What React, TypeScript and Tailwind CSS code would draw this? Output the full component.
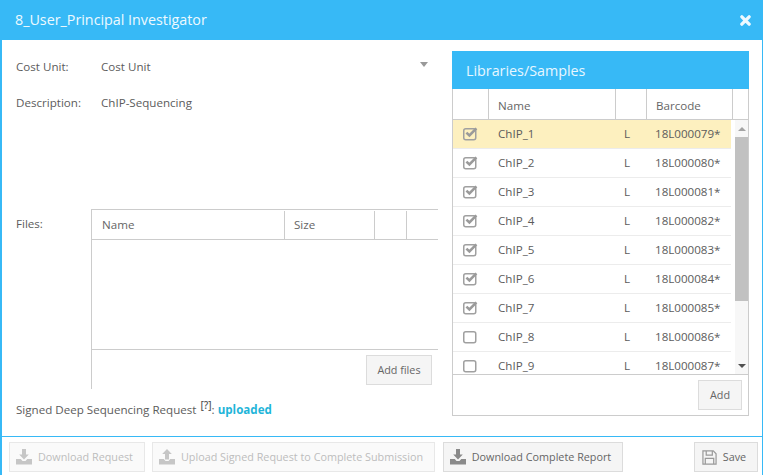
const rows = [
  ["ChIP_1", "18L000079*", true],
  ["ChIP_2", "18L000080*", true],
  ["ChIP_3", "18L000081*", true],
  ["ChIP_4", "18L000082*", true],
  ["ChIP_5", "18L000083*", true],
  ["ChIP_6", "18L000084*", true],
  ["ChIP_7", "18L000085*", true],
  ["ChIP_8", "18L000086*", false],
  ["ChIP_9", "18L000087*", false],
] as const;

function Tray({ up, className }: { up?: boolean; className?: string }) {
  return (
    <svg viewBox="0 0 16 16" className={className} fill="currentColor">
      {up ? <path d="M8 0 L12.8 5 H10 V10.5 H6 V5 H3.2 Z" /> : <path d="M6 0 H10 V5.5 H12.8 L8 10.5 L3.2 5.5 H6 Z" />}
      <path d="M0 10 H4.8 L6.5 12 H9.5 L11.2 10 H16 V15.5 H0 Z" />
    </svg>
  );
}

function Box({ checked }: { checked: boolean }) {
  return (
    <svg viewBox="0 0 15 14" className="h-[14px] w-[15px]">
      <rect x="0.75" y="1.75" width="12" height="11" rx="2" fill="none" stroke="#a0a0a0" strokeWidth="1.5" />
      {checked && <path d="M3.4 5.6 L6.4 8.4 L13.4 1.4" fill="none" stroke="#9a9a9a" strokeWidth="2.6" />}
    </svg>
  );
}

function Btn({ children, className = "" }: { children: React.ReactNode; className?: string }) {
  return (
    <div className={`flex items-center justify-center border border-[#dcdcdc] bg-[#f5f5f5] text-[10.8px] text-[#666] ${className}`}>
      {children}
    </div>
  );
}

export default function App() {
  return (
    <div className="flex h-[475px] w-[763px] flex-col overflow-hidden border-l-2 border-r border-[#37b9f6] bg-white text-[11.6px] text-[#5c5c5c] [font-family:'Open_Sans',sans-serif]">
      <header className="-ml-[2px] -mr-px flex h-10 shrink-0 items-center justify-between bg-[#37b9f6] pl-[15px] pr-[12px] text-white">
        <span className="text-[14.3px] text-[#eef9ff]">8_User_Principal Investigator</span>
        <svg viewBox="0 0 10 10" className="mt-[1px] h-[11px] w-[11px]" fill="none" stroke="#eef9ff" strokeWidth="3" strokeLinecap="round">
          <path d="M1.7 1.7 L8.3 8.3 M8.3 1.7 L1.7 8.3" />
        </svg>
      </header>

      <main className="flex h-[397px] shrink-0 border-b border-[#37b9f6]">
        <section className="flex w-[436px] shrink-0 flex-col pl-[14px]">
          <div className="mt-[18px] flex h-[17px] items-center">
            <span className="w-[85px]">Cost Unit:</span>
            <span className="flex-1">Cost Unit</span>
            <span className="mb-[4px] mr-[10px] h-0 w-0 border-x-[4.5px] border-t-[5px] border-x-transparent border-t-[#999]" />
          </div>
          <div className="mt-[19px] flex h-[17px] items-center">
            <span className="w-[85px]">Description:</span>
            <span>ChIP-Sequencing</span>
          </div>

          <div className="mt-[98px] flex">
            <span className="mt-[6px] w-[75px]">Files:</span>
            <div className="flex h-[180px] w-[347px] flex-col border-l border-t border-[#ccc]">
              <div className="flex h-[30px] shrink-0 border-b border-[#ccc] pt-[1px] text-[#666]">
                <span className="flex w-[193px] items-center border-r border-[#ccc] pl-[10px]">Name</span>
                <span className="flex w-[90px] items-center border-r border-[#ccc] pl-[9px]">Size</span>
                <span className="w-[32px] border-r border-[#ccc]" />
              </div>
              <div className="h-[110px] shrink-0 border-b border-[#ccc]" />
              <div className="flex justify-end pr-[6px] pt-[5px]">
                <Btn className="h-[30px] w-[66px]">Add files</Btn>
              </div>
            </div>
          </div>

          <div className="mt-[12px] flex items-baseline">
            <span>Signed Deep Sequencing Request</span>
            <sup className="ml-[4px] text-[10px] font-semibold leading-none">[?]</sup>
            <span>:</span>
            <span className="ml-[3px] font-bold text-[#1fb5d9]">uploaded</span>
          </div>
        </section>

        <section className="ml-[14px] mt-[11px] flex h-[365px] w-[297px] shrink-0 flex-col border-b border-l border-r border-[#ccc]">
          <div className="-mx-px flex h-[38px] shrink-0 items-center bg-[#37b9f6] pl-[14px] pt-[2px] text-[14.3px] font-medium text-[#e8f7ff]">
            Libraries/Samples
          </div>
          <div className="flex h-[31px] shrink-0 border-b border-[#ccc] text-[#666]">
            <span className="w-[36px] border-r border-[#ccc]" />
            <span className="flex w-[127px] items-center border-r border-[#ccc] pl-[9px] pt-[3px]">Name</span>
            <span className="w-[31px] border-r border-[#ccc]" />
            <span className="flex w-[86px] items-center border-r border-[#ccc] pl-[9px] pt-[3px]">Barcode</span>
          </div>
          <div className="flex h-[255px] shrink-0 border-b border-[#ccc]">
            <div className="w-[278px] shrink-0 overflow-hidden">
              {rows.map(([name, code, checked], i) => (
                <div key={name} className={`flex h-[29px] shrink-0 items-center border-b border-[#ececec] ${i === 0 ? "bg-[#fdf0bf]" : "bg-white"}`}>
                  <span className="flex w-[36px] pl-[10px]"><Box checked={checked} /></span>
                  <span className="w-[127px] pl-[9px]">{name}</span>
                  <span className="w-[39px] pl-[8px]">L</span>
                  <span>{code}</span>
                </div>
              ))}
            </div>
            <div className="ml-[4px] flex w-[13px] flex-col bg-[#f7f7f7]">
              <span className="flex h-[17px] items-center justify-center">
                <span className="h-0 w-0 border-x-[4px] border-b-[4px] border-x-transparent border-b-[#a3a3a3]" />
              </span>
              <span className="h-[164px] bg-[#c1c1c1]" />
              <span className="flex-1" />
              <span className="flex h-[17px] items-center justify-center">
                <span className="h-0 w-0 border-x-[4px] border-t-[4px] border-x-transparent border-t-[#505050]" />
              </span>
            </div>
          </div>
          <div className="flex justify-end pr-[6px] pt-[5px]">
            <Btn className="h-[30px] w-[44px] pt-[1px]">Add</Btn>
          </div>
        </section>
      </main>

      <footer className="flex flex-1 items-center pl-[7px] pr-[4px] pt-[2px]">
        <Btn className="h-[30px] w-[136px] gap-[6px] border-[#e8e8e8] bg-[#fafafa] pr-[5px] text-[#bdbdbd]">
          <Tray className="h-4 w-4 text-[#c6c6c6]" />Download Request
        </Btn>
        <Btn className="ml-[7px] h-[30px] w-[283px] gap-[6px] border-[#e8e8e8] bg-[#fafafa] pr-[5px] text-[#bdbdbd]">
          <Tray up className="h-4 w-4 text-[#c6c6c6]" />Upload Signed Request to Complete Submission
        </Btn>
        <Btn className="ml-[8px] h-[30px] w-[180px] gap-[6px] pr-[5px]">
          <Tray className="h-4 w-4 text-[#8a8a8a]" />Download Complete Report
        </Btn>
        <Btn className="ml-auto h-[30px] w-[64px] gap-[6px] pr-[4px]">
          <svg viewBox="0 0 16 16" className="h-[15px] w-[15px]" fill="none" stroke="#999" strokeWidth="1.3">
            <path d="M1 1 H12 L15 4 V15 H1 Z M4.5 1 V5.5 H11 V1 M3.5 15 V9 H12.5 V15" />
          </svg>
          Save
        </Btn>
      </footer>
    </div>
  );
}
